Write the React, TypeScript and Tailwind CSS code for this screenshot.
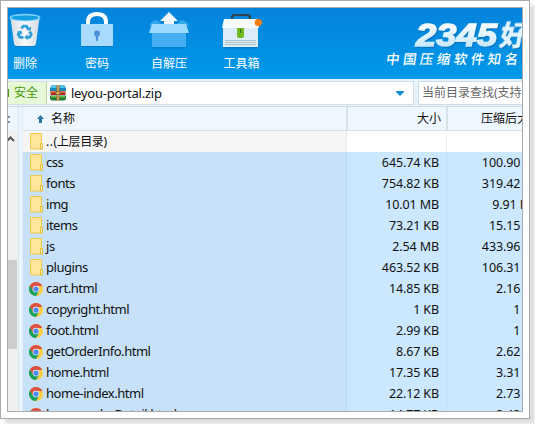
import type { ReactNode } from "react";

type Entry = { name: string; size: string; packed: string; kind: "folder" | "html" };

const entries: Entry[] = [
  { name: "css", size: "645.74 KB", packed: "100.90 KB", kind: "folder" },
  { name: "fonts", size: "754.82 KB", packed: "319.42 KB", kind: "folder" },
  { name: "img", size: "10.01 MB", packed: "9.91 MB", kind: "folder" },
  { name: "items", size: "73.21 KB", packed: "15.15 KB", kind: "folder" },
  { name: "js", size: "2.54 MB", packed: "433.96 KB", kind: "folder" },
  { name: "plugins", size: "463.52 KB", packed: "106.31 KB", kind: "folder" },
  { name: "cart.html", size: "14.85 KB", packed: "2.16 KB", kind: "html" },
  { name: "copyright.html", size: "1 KB", packed: "1 KB", kind: "html" },
  { name: "foot.html", size: "2.99 KB", packed: "1 KB", kind: "html" },
  { name: "getOrderInfo.html", size: "8.67 KB", packed: "2.62 KB", kind: "html" },
  { name: "home.html", size: "17.35 KB", packed: "3.31 KB", kind: "html" },
  { name: "home-index.html", size: "22.12 KB", packed: "2.73 KB", kind: "html" },
  { name: "home-orderDetail.html", size: "14.77 KB", packed: "2.43 KB", kind: "html" },
];

function FolderIcon() {
  return (
    <svg width="14" height="17" viewBox="0 0 14 17" className="block">
      <path d="M.5.5h11v10h1v5.500H.5z" fill="#ffe69b" stroke="#efc94c" />
      <path d="M10.500 10.500h2V16h-2z" fill="#fff0b5" stroke="#e8bd3c" />
    </svg>
  );
}

function ChromeIcon() {
  return (
    <svg width="14" height="14" viewBox="0 0 48 48" className="block">
      <circle cx="24" cy="24" r="24" fill="#ffcd41" />
      <path d="M24 24 3.200 12A24 24 0 0 0 24 48l11-18z" fill="#16a05d" />
      <path d="M3.200 12A24 24 0 0 1 44.800 12L46 14H24L13 29z" fill="#dd5144" />
      <circle cx="24" cy="24" r="11.500" fill="#f1f1f1" />
      <circle cx="24" cy="24" r="9" fill="#4a8af4" />
    </svg>
  );
}

function BinIcon() {
  return (
    <svg width="34" height="36" viewBox="0 0 34 36" className="block">
      <defs>
        <linearGradient id="bin" x2="1">
          <stop stopColor="#d5dee4" />
          <stop offset=".5" stopColor="#f7f8f9" />
          <stop offset="1" stopColor="#d3dce2" />
        </linearGradient>
      </defs>
      <path d="M3 6h28l-3.400 25.500Q27.200 34 25 34H9q-2.200 0-2.600-2.500z" fill="#0878b8" opacity=".6" />
      <path d="M2.500 5h29L28 30.500Q27.600 33 25 33H9q-2.600 0-3-2.500z" fill="url(#bin)" />
      <ellipse cx="17" cy="4.500" rx="15.500" ry="3.800" fill="#78d1fa" />
      <ellipse cx="17" cy="4.800" rx="13.500" ry="2.400" fill="#139fe0" />
      <g fill="none" stroke="#2e9fda" strokeWidth="2.800" strokeLinejoin="round">
        <path d="m13.500 15.500 1.500-2.300h3.500l1.700 2.800" />
        <path d="m21.500 18.500 1.800 3-1.800 2.800h-2.500" />
        <path d="M15.500 24.300h-3.500L10.200 21.500l1.500-2.500" />
      </g>
      <path d="m18.200 17.300 4.600.3.300-4.300zM19.500 21.200v6l-3.200-3zM9 18.800l4.300-1.300 1 4.300z" fill="#2e9fda" />
    </svg>
  );
}

function LockIcon() {
  return (
    <svg width="34" height="36" viewBox="0 0 34 36" className="block">
      <path d="M1 16h32v19H1z" fill="#0878bd" opacity=".6" />
      <path d="M8 13V10q0-8 9-8t9 8v3" fill="none" stroke="#fff" strokeWidth="4" />
      <rect x="1" y="12" width="32" height="22" rx=".7" fill="#a9dbff" />
      <circle cx="17" cy="21.500" r="3" fill="#4c91d8" />
      <path d="M15.500 22h3l-.7 7h-1.600z" fill="#4c91d8" />
    </svg>
  );
}

function UnpackIcon() {
  return (
    <svg width="42" height="37" viewBox="0 0 42 37" className="block">
      <path d="M4 14h34v22.500H4z" fill="#0475bb" opacity=".6" />
      <path d="m4 13-3 2q1-6 8-7l5 5zM38 13l3 2q-1-6-8-7l-5 5z" fill="#35a8ea" />
      <path d="M4 13h34v22H4z" fill="#45aff3" />
      <path d="m21 0 9 9h-4v6H16V9h-4z" fill="#f4faff" />
      <path d="M4 12h34l3 9H1z" fill="#9bdaff" />
    </svg>
  );
}

function ToolboxIcon() {
  return (
    <svg width="41" height="35" viewBox="0 0 41 35" className="block">
      <path d="M11 6V4q0-3 3-3h12q3 0 3 3v2" fill="none" stroke="#30434f" strokeWidth="2.200" />
      <path d="M2 13h35v21.500H2z" fill="#0878bd" opacity=".6" />
      <path d="M2 14h35v19H2z" fill="#deedfa" />
      <path d="M3 5h33l2 9H1z" fill="#f9fcff" />
      <path d="M4 26.500h31M4 28.500h31M4 30.500h31" stroke="#a8bdcc" strokeWidth=".9" />
      <path d="M16 14h7v8q0 2-2 2h-3q-2 0-2-2z" fill="#70b920" />
      <path d="M19 15h1v4h-1z" fill="#316e19" />
      <circle cx="37.300" cy="8.500" r="3.600" fill="#ff7e0b" />
    </svg>
  );
}

function ArchiveIcon() {
  return (
    <svg width="16" height="16" viewBox="0 0 16 16" className="block">
      <path d="M2 0h12l2 3v3H0V3z" fill="#1986b8" />
      <path d="M2 0h12l1 3H1z" fill="#51c5ed" />
      <path d="M.5 6h15v4H.5z" fill="#ac3022" />
      <path d="M1 6h14v1.500H1z" fill="#ef7043" />
      <path d="M0 10.500h16V14l-1.500 1.500h-13L0 14z" fill="#247b38" />
      <path d="M1 11h14v1.500H1z" fill="#66bd4a" />
      <path d="M6.500 0h3v15.500h-3z" fill="#9c6530" />
      <path d="M7.500 0h1v15.500h-1z" fill="#f1c978" />
      <path d="M6 6.500h4v3H6z" fill="#e5b35a" stroke="#75543c" strokeWidth=".8" />
    </svg>
  );
}

function Tool({ icon, label, className, iconClassName }: { icon: ReactNode; label: string; className: string; iconClassName: string }) {
  return (
    <div className={`flex shrink-0 flex-col items-center text-white ${className}`}>
      <div className={`flex h-[42px] shrink-0 items-end ${iconClassName}`}>{icon}</div>
      <span className="mt-[5px] h-[18px] whitespace-nowrap text-[12px] leading-[18px]">{label}</span>
    </div>
  );
}

function Toolbar() {
  return (
    <header className="flex h-[71px] shrink-0 overflow-hidden bg-gradient-to-b from-[#0583dc] to-[#0099e9]">
      <Tool icon={<BinIcon />} label="删除" className="w-[34px]" iconClassName="pb-[1px]" />
      <Tool icon={<LockIcon />} label="密码" className="ml-[38px] w-[34px]" iconClassName="pb-[2px]" />
      <Tool icon={<UnpackIcon />} label="自解压" className="ml-[34px] w-[42px]" iconClassName="pb-[1px]" />
      <Tool icon={<ToolboxIcon />} label="工具箱" className="ml-[31px] w-[41px]" iconClassName="pb-[1px]" />
      <svg width="138" height="71" viewBox="384 8 138 71" className="ml-auto block shrink-0">
        <defs>
          <linearGradient id="logo" x1="0" y1="22" x2="0" y2="47" gradientUnits="userSpaceOnUse">
            <stop stopColor="#fff" />
            <stop offset="1" stopColor="#c4e9fb" />
          </linearGradient>
        </defs>
        <text
          x="416"
          y="45.500"
          fontSize="30.500"
          textLength="81"
          lengthAdjust="spacingAndGlyphs"
          fill="url(#logo)"
          stroke="url(#logo)"
          strokeWidth="1.400"
          className="font-['Liberation_Sans',sans-serif] font-bold italic [filter:drop-shadow(1px_1px_0_#0873bd)]"
        >
          2345
        </text>
        <text
          transform="translate(499 45) skewX(-10)"
          fontSize="27"
          fill="#e2f5ff"
          stroke="#e2f5ff"
          strokeWidth=".8"
          className="font-['Noto_Sans_CJK_SC',sans-serif] font-bold [filter:drop-shadow(1px_1px_0_#0873bd)]"
        >
          好
        </text>
        <text
          transform="translate(385.500 64) skewX(-8)"
          fontSize="13.500"
          textLength="132"
          fill="#fff"
          className="font-['Noto_Sans_CJK_SC',sans-serif] font-medium"
        >
          中国压缩软件知名
        </text>
      </svg>
    </header>
  );
}

function AddressBar() {
  return (
    <div className="flex h-[28px] shrink-0 border-b border-[#ccdbe6] bg-[#e8f2fb] pt-[2px] pb-[1px]">
      <div className="flex w-[406px] shrink-0 items-center border-y border-r border-[#d3dfe8] bg-white">
        <div className="flex h-full w-[39px] items-center border-r border-[#afd89a] bg-[#e5f9d6] text-[#459806]">
          <span className="h-[8px] w-[1px] bg-[#459806]" />
          <span className="ml-[5px] text-[12px] leading-[20px]">安全</span>
        </div>
        <div className="ml-[3px]">
          <ArchiveIcon />
        </div>
        <span className="ml-[5px] text-[13px] leading-[20px] tracking-[-0.25px]">leyou-portal.zip</span>
        <svg width="8" height="5" viewBox="0 0 8 5" className="mr-[9px] ml-auto">
          <path d="M0 0h8v1L4 5 0 1z" fill="#158bd0" />
        </svg>
      </div>
      <div className="ml-[4px] flex flex-1 items-center overflow-hidden border-y border-l border-[#ccdbe6] bg-white pl-[3px] text-[12px] whitespace-nowrap text-[#666]">
        当前目录查找(支持包内查找)
      </div>
    </div>
  );
}

function Sidebar() {
  return (
    <div className="flex w-[15px] shrink-0 border-r border-[#e3edf6] bg-[#edf6ff]">
      <div className="w-[10px] shrink-0 bg-[#f0f0f0]">
        <div className="flex h-[23px] flex-col gap-[3px] bg-[#edf6ff] pt-[9px]">
          <span className="h-[2px] w-[2px] bg-[#718fad]" />
          <span className="h-[2px] w-[2px] bg-[#718fad]" />
        </div>
        <svg width="8" height="15" viewBox="0 0 8 15" className="block">
          <path d="m-1 11 3.500-3.500L6 11" fill="none" stroke="#555" strokeWidth="2" />
        </svg>
        <div className="mt-[115px] h-[89px] w-[9px] bg-[#cdcdcd]" />
      </div>
      <div className="w-[1px] bg-[#d8e5ed]" />
    </div>
  );
}

function FileTable() {
  return (
    <main className="w-[499px] shrink-0 overflow-hidden bg-white">
      <div className="flex h-[24px] border-b border-[#d3e0e9] bg-[#eef6ff] text-[12px] leading-[23px]">
        <div className="flex w-[325px] shrink-0 items-center border-r-2 border-[#d6e1ea] pl-[14px]">
          <svg width="7" height="8" viewBox="0 0 7 8">
            <path d="M3.500 0 7 4H5v4H2V4H0z" fill="#2c78a0" />
          </svg>
          <span className="ml-[7px]">名称</span>
        </div>
        <div className="w-[100px] shrink-0 border-r-2 border-[#d6e1ea] pr-[5px] text-right">大小</div>
        <div className="shrink-0 pl-[33px] whitespace-nowrap">压缩后大小</div>
      </div>
      <div className="flex h-[21px] text-[12px] leading-[21px]">
        <div className="flex w-[324px] shrink-0 items-center border-r border-[#e1edf7] bg-[#f6f6f6] pl-[7px]">
          <FolderIcon />
          <span className="ml-[2px] tracking-[-0.3px]">
            <span className="tracking-[0.5px]">..</span>(上层目录)
          </span>
        </div>
        <div className="w-[100px] border-r border-[#e9f3fb]" />
      </div>
      {entries.map((entry) => (
        <div key={entry.name} className="flex h-[21px] bg-[#cce8ff] text-[12.5px] leading-[21px] tracking-[-0.12px]">
          <div className="flex w-[324px] shrink-0 items-center border-r border-[#b7daf6] bg-[#c7e1f8]">
            <div className={`flex w-[23px] shrink-0 ${entry.kind === "folder" ? "pl-[7px]" : "pl-[6px]"}`}>
              {entry.kind === "folder" ? <FolderIcon /> : <ChromeIcon />}
            </div>
            <span className="text-[13px] tracking-[-0.47px]">{entry.name}</span>
          </div>
          <div className="w-[100px] shrink-0 border-r border-[#b9dfff] pr-[7px] text-right">{entry.size}</div>
          <div className="w-[92px] shrink-0 text-right whitespace-nowrap">{entry.packed}</div>
        </div>
      ))}
    </main>
  );
}

export default function App() {
  return (
    <div className="h-[424px] w-[535px] overflow-hidden bg-white font-['Noto_Sans','Noto_Sans_CJK_SC',sans-serif] text-[#111]">
      <div className="h-[419px] w-[530px] border border-[#aaa] bg-white p-[6px] shadow-[5px_5px_4px_#ddd]">
        <div className="flex h-[405px] w-[516px] flex-col overflow-hidden border border-[#aaa] bg-white">
          <Toolbar />
          <AddressBar />
          <div className="flex min-h-0 flex-1 overflow-hidden">
            <Sidebar />
            <FileTable />
          </div>
        </div>
      </div>
    </div>
  );
}
